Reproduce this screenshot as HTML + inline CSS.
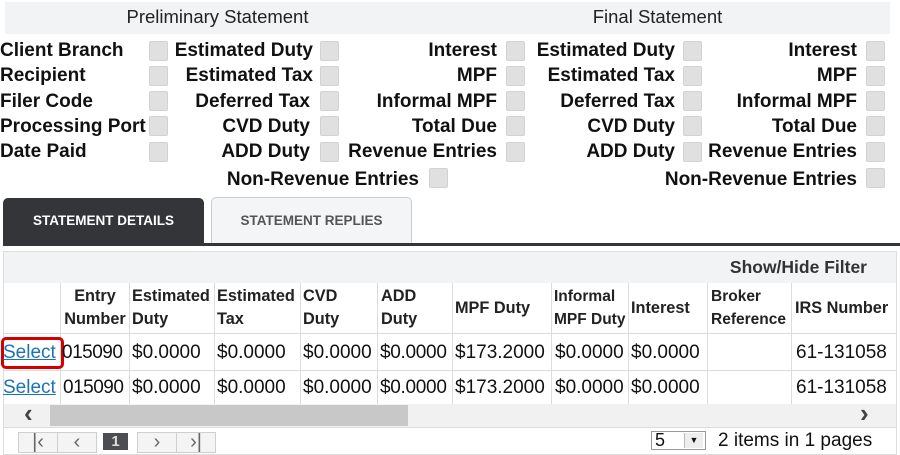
<!DOCTYPE html>
<html><head><style>
*{margin:0;padding:0;box-sizing:border-box}
body{width:900px;height:455px;background:#fff;font-family:"Liberation Sans",Arial,sans-serif;position:relative;overflow:hidden;color:#111}
.a{position:absolute;white-space:nowrap}
.lb{font-weight:bold;font-size:19px;letter-spacing:0px;line-height:20px}
.r{text-align:right}
.cb{position:absolute;width:19px;height:20px;background:#e0e0e0;border:1px solid #d2d2d2;border-radius:2px}
.hd{font-weight:bold;font-size:16.3px;line-height:23px;color:#222}
.c{font-size:19px}
.vl{position:absolute;width:1px;background:#dcdcdc}
.hl{position:absolute;height:1px;background:#dcdcdc}
.pb{position:absolute;top:432px;height:21px;width:40px;border:1px solid #cfcfcf;background:#f4f4f4;color:#666;font-size:20px;text-align:center;line-height:18px}
</style></head><body>
<div class="a" style="left:5px;top:2px;width:885px;height:32px;background:#f2f3f5"></div>
<div class="a" style="left:0;width:435px;top:6px;text-align:center;font-size:18.5px;color:#222">Preliminary Statement</div>
<div class="a" style="left:440px;width:435px;top:6px;text-align:center;font-size:18.5px;color:#222">Final Statement</div>

<div class="a lb" style="left:0;top:41px">Client Branch</div>
<div class="a lb" style="left:0;top:66px">Recipient</div>
<div class="a lb" style="left:0;top:92px">Filer Code</div>
<div class="a lb" style="left:0;top:117px">Processing Port</div>
<div class="a lb" style="left:0;top:142px">Date Paid</div>

<div class="a lb r" style="right:587px;top:41px">Estimated Duty</div>
<div class="a lb r" style="right:587px;top:66px">Estimated Tax</div>
<div class="a lb r" style="right:590px;top:92px">Deferred Tax</div>
<div class="a lb r" style="right:590px;top:117px">CVD Duty</div>
<div class="a lb r" style="right:590px;top:142px">ADD Duty</div>

<div class="a lb r" style="right:403px;top:41px">Interest</div>
<div class="a lb r" style="right:403px;top:66px">MPF</div>
<div class="a lb r" style="right:403px;top:92px">Informal MPF</div>
<div class="a lb r" style="right:403px;top:117px">Total Due</div>
<div class="a lb r" style="right:403px;top:142px">Revenue Entries</div>
<div class="a lb r" style="right:481px;top:170px">Non-Revenue Entries</div>

<div class="a lb r" style="right:225px;top:41px">Estimated Duty</div>
<div class="a lb r" style="right:225px;top:66px">Estimated Tax</div>
<div class="a lb r" style="right:225px;top:92px">Deferred Tax</div>
<div class="a lb r" style="right:225px;top:117px">CVD Duty</div>
<div class="a lb r" style="right:225px;top:142px">ADD Duty</div>

<div class="a lb r" style="right:43px;top:41px">Interest</div>
<div class="a lb r" style="right:43px;top:66px">MPF</div>
<div class="a lb r" style="right:43px;top:92px">Informal MPF</div>
<div class="a lb r" style="right:43px;top:117px">Total Due</div>
<div class="a lb r" style="right:43px;top:142px">Revenue Entries</div>
<div class="a lb r" style="right:43px;top:170px">Non-Revenue Entries</div>

<div class="cb" style="left:149px;top:41px"></div><div class="cb" style="left:149px;top:66px"></div><div class="cb" style="left:149px;top:91px"></div><div class="cb" style="left:149px;top:116px"></div><div class="cb" style="left:149px;top:142px"></div>
<div class="cb" style="left:320px;top:41px"></div><div class="cb" style="left:320px;top:66px"></div><div class="cb" style="left:320px;top:91px"></div><div class="cb" style="left:320px;top:116px"></div><div class="cb" style="left:320px;top:142px"></div>
<div class="cb" style="left:506px;top:41px"></div><div class="cb" style="left:506px;top:66px"></div><div class="cb" style="left:506px;top:91px"></div><div class="cb" style="left:506px;top:116px"></div><div class="cb" style="left:506px;top:142px"></div>
<div class="cb" style="left:683px;top:41px"></div><div class="cb" style="left:683px;top:66px"></div><div class="cb" style="left:683px;top:91px"></div><div class="cb" style="left:683px;top:116px"></div><div class="cb" style="left:683px;top:142px"></div>
<div class="cb" style="left:866px;top:41px"></div><div class="cb" style="left:866px;top:66px"></div><div class="cb" style="left:866px;top:91px"></div><div class="cb" style="left:866px;top:116px"></div><div class="cb" style="left:866px;top:142px"></div>
<div class="cb" style="left:429px;top:168px"></div><div class="cb" style="left:866px;top:168px"></div>

<div class="a" style="left:3px;top:198px;width:201px;height:46px;background:#333538;border-radius:5px 5px 0 0;color:#fff;font-weight:bold;font-size:13.5px;text-align:center;line-height:46px">STATEMENT DETAILS</div>
<div class="a" style="left:211px;top:197px;width:201px;height:47px;background:#f4f5f7;border:1px solid #ccc;border-bottom:none;border-radius:5px 5px 0 0;color:#555;font-weight:bold;font-size:13.5px;text-align:center;line-height:46px">STATEMENT REPLIES</div>
<div class="a" style="left:3px;top:243px;width:897px;height:3px;background:#333538"></div>

<div class="a" style="left:3px;top:251px;width:894px;height:204px;border:1px solid #dcdcdc"></div>
<div class="a" style="left:4px;top:252px;width:892px;height:31px;background:#f2f3f5"></div>
<div class="a" style="right:33px;top:257px;font-weight:bold;font-size:17.5px;color:#333">Show/Hide Filter</div>

<div class="hl" style="left:4px;width:892px;top:333px"></div>
<div class="hl" style="left:4px;width:892px;top:370px"></div>
<div class="vl" style="left:60px;top:283px;height:121px"></div>
<div class="vl" style="left:129px;top:283px;height:121px"></div>
<div class="vl" style="left:214px;top:283px;height:121px"></div>
<div class="vl" style="left:300px;top:283px;height:121px"></div>
<div class="vl" style="left:377px;top:283px;height:121px"></div>
<div class="vl" style="left:452px;top:283px;height:121px"></div>
<div class="vl" style="left:551px;top:283px;height:121px"></div>
<div class="vl" style="left:628px;top:283px;height:121px"></div>
<div class="vl" style="left:707px;top:283px;height:121px"></div>
<div class="vl" style="left:791px;top:283px;height:121px"></div>

<div class="a hd" style="left:61px;top:285px;width:68px;text-align:center">Entry<br>Number</div>
<div class="a hd" style="left:132px;top:285px">Estimated<br>Duty</div>
<div class="a hd" style="left:217px;top:285px">Estimated<br>Tax</div>
<div class="a hd" style="left:303px;top:285px">CVD<br>Duty</div>
<div class="a hd" style="left:381px;top:285px">ADD<br>Duty</div>
<div class="a hd" style="left:455px;top:297px">MPF Duty</div>
<div class="a hd" style="left:554px;top:285px;font-size:15.5px">Informal<br>MPF Duty</div>
<div class="a hd" style="left:631px;top:297px">Interest</div>
<div class="a hd" style="left:711px;top:285px;font-size:15.5px">Broker<br>Reference</div>
<div class="a hd" style="left:795px;top:297px">IRS Number</div>

<div class="a" style="left:1px;top:337px;width:63px;height:32px;border:3px solid #d40000;border-radius:5px"></div>
<div class="a c" style="left:3px;top:342px;color:#1a73b5;text-decoration:underline">Select</div>
<div class="a c" style="left:3px;top:377px;color:#1a73b5;text-decoration:underline">Select</div>
<div class="a c" style="left:62px;top:342px;letter-spacing:-0.5px">015090</div><div class="a c" style="left:63px;top:377px;letter-spacing:-0.5px">015090</div>
<div class="a c" style="left:132px;top:342px">$0.0000</div><div class="a c" style="left:132px;top:377px">$0.0000</div>
<div class="a c" style="left:217px;top:342px">$0.0000</div><div class="a c" style="left:217px;top:377px">$0.0000</div>
<div class="a c" style="left:303px;top:342px">$0.0000</div><div class="a c" style="left:303px;top:377px">$0.0000</div>
<div class="a c" style="left:380px;top:342px;letter-spacing:-0.3px">$0.0000</div><div class="a c" style="left:380px;top:377px;letter-spacing:-0.3px">$0.0000</div>
<div class="a c" style="left:455px;top:342px">$173.2000</div><div class="a c" style="left:455px;top:377px">$173.2000</div>
<div class="a c" style="left:555px;top:342px">$0.0000</div><div class="a c" style="left:555px;top:377px">$0.0000</div>
<div class="a c" style="left:631px;top:342px">$0.0000</div><div class="a c" style="left:631px;top:377px">$0.0000</div>
<div class="a c" style="left:796px;top:342px">61-131058</div><div class="a c" style="left:796px;top:377px">61-131058</div>

<div class="a" style="left:4px;top:404px;width:892px;height:23px;background:#f1f1f1"></div>
<div class="a" style="left:50px;top:405px;width:358px;height:21px;background:#c8c8c8"></div>
<div class="a" style="left:24px;top:400px;font-size:26px;font-weight:bold;color:#444;line-height:26px">&lsaquo;</div>
<div class="a" style="left:860px;top:400px;font-size:26px;font-weight:bold;color:#444;line-height:26px">&rsaquo;</div>
<div class="hl" style="left:4px;width:892px;top:427px"></div>

<div class="pb" style="left:18px">|&lsaquo;</div>
<div class="pb" style="left:57px">&lsaquo;</div>
<div class="a" style="left:103px;top:433px;width:25px;height:17px;background:#4c4d52;color:#ddd;font-weight:bold;font-size:15px;text-align:center;line-height:17px">1</div>
<div class="pb" style="left:137px">&rsaquo;</div>
<div class="pb" style="left:176px">&rsaquo;|</div>

<div class="a" style="left:651px;top:431px;width:55px;height:19px;border:1px solid #999;background:#fff;font-size:18px;line-height:17px;padding-left:3px">5</div>
<div class="a" style="left:684px;top:433px;width:19px;height:15px;background:#eee;border-left:1px solid #bbb;font-size:9px;text-align:center;line-height:15px">▼</div>
<div class="a" style="left:718px;top:430px;font-size:19px">2 items in 1 pages</div>
</body></html>
